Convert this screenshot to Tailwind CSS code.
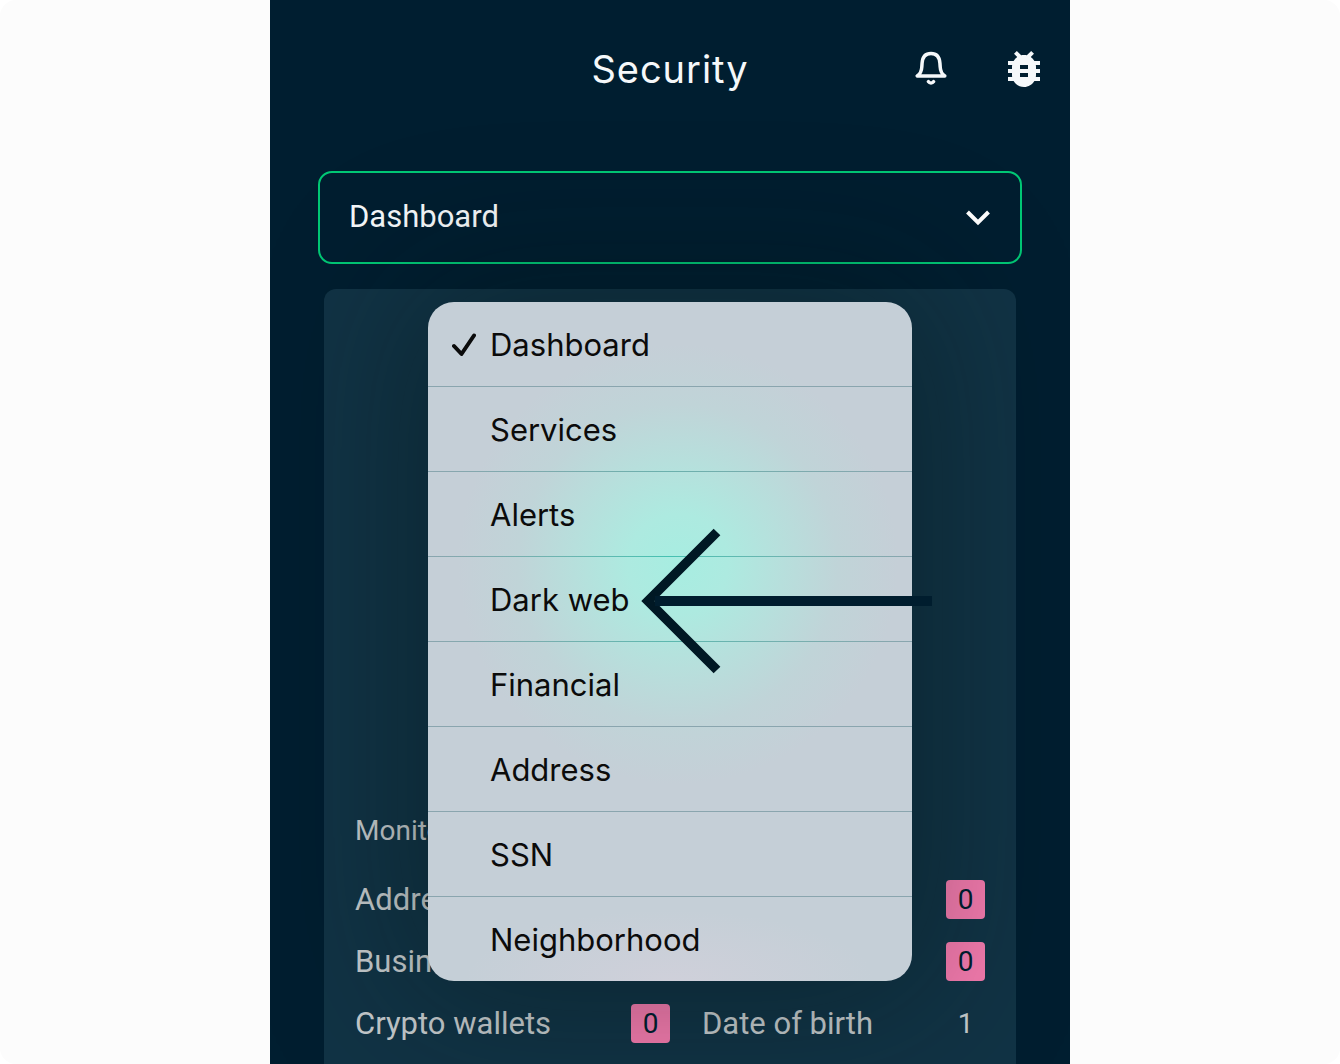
<!DOCTYPE html>
<html lang="en">
<head>
    <meta charset="UTF-8">
    <meta name="viewport" content="width=device-width, initial-scale=1.0">
    <title>Security</title>
    <script src="https://cdn.jsdelivr.net/npm/@tailwindcss/browser@4"></script>
</head>
<body class="bg-white">
    <div class="min-h-screen overflow-hidden rounded-2xl bg-[#fcfcfc]">
        <main class="mx-auto flex min-h-screen w-full max-w-[800px] flex-col overflow-hidden bg-[#001e30] font-['Roboto',sans-serif]">
            <!-- Header -->
            <header class="grid h-[138px] grid-cols-[1fr_auto_1fr] items-center px-[22px] text-[#f5f8fa]">
                <h1 class="col-start-2 font-['Inter',sans-serif] text-[38px] tracking-wide">Security</h1>
                <div class="flex items-center justify-end gap-[45px]">
                    <button type="button" aria-label="Notifications">
                        <svg class="size-12" viewBox="0 0 48 48" fill="none" stroke="currentColor" stroke-width="3.5" stroke-linecap="round" stroke-linejoin="round">
                            <path d="M10.200 31h27.600c-3-2-4.400-5-4.600-9l-.3-4C32.500 12 29.500 8.400 24 8.400S15.500 12 15.100 18l-.3 4c-.2 4-1.600 7-4.600 9z"/>
                            <path d="M21.400 36.600c1.200 1.800 4 1.800 5.200 0"/>
                        </svg>
                    </button>
                    <button type="button" aria-label="Report a bug">
                        <svg class="size-12" viewBox="0 0 24 24" fill="currentColor">
                            <path d="M20 8h-2.810c-.45-.78-1.070-1.450-1.820-1.960L17 4.410 15.590 3l-2.170 2.170C12.960 5.060 12.490 5 12 5s-.96.06-1.410.17L8.410 3 7 4.410l1.620 1.630C7.880 6.550 7.260 7.220 6.810 8H4v2h2.090c-.05.33-.09.66-.09 1v1H4v2h2v1c0 .34.04.67.09 1H4v2h2.810c1.040 1.790 2.970 3 5.190 3s4.150-1.210 5.190-3H20v-2h-2.090c.05-.33.09-.66.09-1v-1h2v-2h-2v-1c0-.34-.04-.67-.09-1H20V8zm-6 8h-4v-2h4v2zm0-4h-4v-2h4v2z"/>
                        </svg>
                    </button>
                </div>
            </header>

            <!-- Section picker -->
            <div class="relative mx-12 mt-[33px]">
                <select aria-label="Section" class="h-[93px] w-full appearance-none rounded-[14px] border-2 border-[#00c875] bg-transparent px-[29px] text-[31px] text-[#f5f8fa]">
                    <option>Dashboard</option>
                </select>
                <svg class="pointer-events-none absolute top-1/2 right-8 h-4 w-6 -translate-y-1/2" viewBox="0 0 24 16" fill="none" stroke="#fff" stroke-width="4">
                    <path d="M1.500 2 12 12.500 22.500 2"/>
                </svg>
            </div>

            <section class="relative mx-[54px] mt-[25px] flex-1 rounded-t-[12px] bg-[#113345] px-[31px] pt-[522px] text-[31px] text-[#c5cacc]">
                <h2 class="text-[28px] leading-10">Monitored</h2>
                <div class="mt-[29px] grid grid-cols-[1fr_283px] gap-x-8 gap-y-[23px]">
                    <div class="flex items-center justify-between leading-[39px]">
                        <span>Addresses</span>
                    </div>
                    <div class="flex items-center justify-end leading-[39px]">
                        <span class="size-[39px] rounded-[4px] bg-[#f57bae] text-center text-[28px] text-[#001e30]">0</span>
                    </div>
                    <div class="flex items-center justify-between leading-[39px]">
                        <span>Business</span>
                    </div>
                    <div class="flex items-center justify-end leading-[39px]">
                        <span class="size-[39px] rounded-[4px] bg-[#f57bae] text-center text-[28px] text-[#001e30]">0</span>
                    </div>
                    <div class="flex items-center justify-between leading-[39px]">
                        <span>Crypto wallets</span>
                        <span class="size-[39px] rounded-[4px] bg-[#f57bae] text-center text-[28px] text-[#001e30]">0</span>
                    </div>
                    <div class="flex items-center justify-between leading-[39px]">
                        <span>Date of birth</span>
                        <span class="w-[39px] text-center text-[28px]">1</span>
                    </div>
                </div>

                <!-- Open menu -->
                <div class="absolute top-[13px] left-1/2 w-[484px] -translate-x-1/2">
                    <div class="flex flex-col overflow-hidden rounded-[26px] bg-[#c5cfd7] bg-[radial-gradient(circle_at_250px_262px,#a7ede1_0px,#adeae0_50px,#b7dfdc_105px,#c0d4d8_160px,#c5cfd7_220px)] font-['Inter',sans-serif] text-[31px] text-[#0b0b0b] shadow-[0_0_150px_16px_rgba(0,18,18,0.38)]">
                        <button type="button" class="flex h-[84px] items-center pt-0.5 pl-6 text-left">
                            <svg class="mr-[14px] h-6 w-6" viewBox="0 0 24 24" fill="none" stroke="currentColor" stroke-width="4" stroke-linecap="round" stroke-linejoin="round">
                                <path d="M2 13 9.500 21 22 2.500"/>
                            </svg>
                            Dashboard
                        </button>
                        <hr class="h-px border-0 bg-[#8aa5ae]">
                        <button type="button" class="h-[84px] pt-0.5 pl-[62px] text-left">Services</button>
                        <hr class="h-px border-0 bg-linear-to-r from-[#8aa5ae] via-[#6bb0ad] to-[#8aa5ae]">
                        <button type="button" class="h-[84px] pt-0.5 pl-[62px] text-left">Alerts</button>
                        <hr class="h-px border-0 bg-linear-to-r from-[#8aa5ae] via-[#45c1b2] to-[#8aa5ae]">
                        <button type="button" class="h-[84px] pt-0.5 pl-[62px] text-left">Dark web</button>
                        <hr class="h-px border-0 bg-linear-to-r from-[#8aa5ae] via-[#5cb8af] to-[#8aa5ae]">
                        <button type="button" class="h-[84px] pt-0.5 pl-[62px] text-left">Financial</button>
                        <hr class="h-px border-0 bg-[#8aa5ae]">
                        <button type="button" class="h-[84px] pt-0.5 pl-[62px] text-left">Address</button>
                        <hr class="h-px border-0 bg-[#8aa5ae]">
                        <button type="button" class="h-[84px] pt-0.5 pl-[62px] text-left">SSN</button>
                        <hr class="h-px border-0 bg-[#8aa5ae]">
                        <button type="button" class="h-[84px] bg-[radial-gradient(ellipse_at_bottom,#cfd0da,transparent_60%)] pt-0.5 pl-[62px] text-left">Neighborhood</button>
                    </div>

                    <!-- Pointer arrow -->
                    <svg class="pointer-events-none absolute top-[226px] left-[213px] h-[146px] w-[291px]" viewBox="0 0 291 146" fill="none">
                        <path d="M76 4 7 73l69 69" stroke="#001824" stroke-width="9.500"/>
                        <path d="M14 73h277" stroke="#001d2e" stroke-width="10"/>
                    </svg>
                </div>
            </section>
        </main>
    </div>
</body>
</html>
